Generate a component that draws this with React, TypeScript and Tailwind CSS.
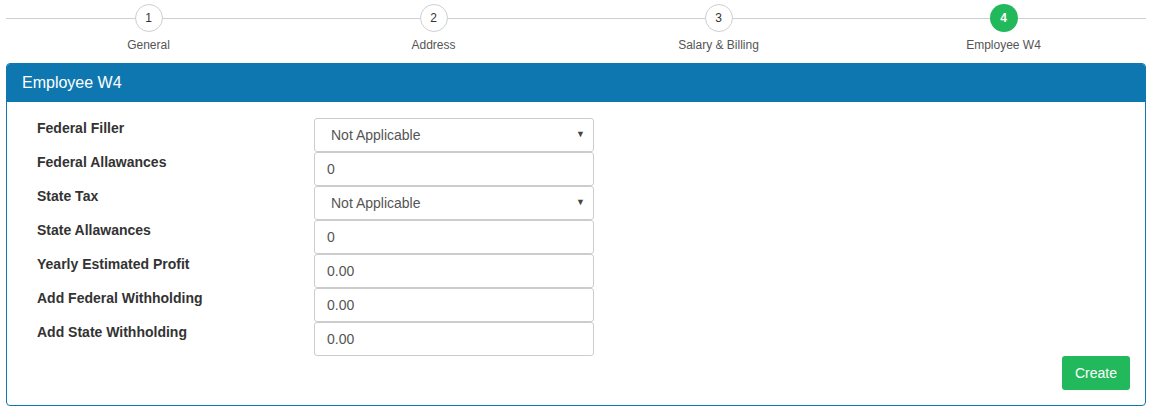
import React from "react";

const steps = [
	{ n: 1, label: "General" },
	{ n: 2, label: "Address" },
	{ n: 3, label: "Salary & Billing" },
	{ n: 4, label: "Employee W4", active: true },
];

const fields = [
	{ label: "Federal Filler", value: "Not Applicable", select: true },
	{ label: "Federal Allawances", value: "0" },
	{ label: "State Tax", value: "Not Applicable", select: true },
	{ label: "State Allawances", value: "0" },
	{ label: "Yearly Estimated Profit", value: "0.00" },
	{ label: "Add Federal Withholding", value: "0.00" },
	{ label: "Add State Withholding", value: "0.00" },
];

function Stepper() {
	return (
		<div className="relative mx-[6px] grid grid-cols-4 pt-[4px]">
			<div className="absolute left-0 right-0 top-[18px] h-px bg-[#cfcfcf]" />
			{steps.map((s) => (
				<div key={s.n} className="relative flex flex-col items-center">
					<div
						className={
							s.active
								? "flex h-[28px] w-[28px] items-center justify-center rounded-full bg-[#22b95c] text-[12px] font-bold text-white"
								: "flex h-[28px] w-[28px] items-center justify-center rounded-full border border-[#cfcfcf] bg-white text-[12px] text-[#333]"
						}>
						{s.n}
					</div>
					<div className="mt-[6px] text-[12px] leading-[14px] text-[#555]">{s.label}</div>
				</div>
			))}
		</div>
	);
}

export default function App() {
	return (
		<div className="h-[412px] w-[1152px] bg-white font-['Liberation_Sans',Arial,sans-serif] text-[#333]">
			<Stepper />
			<div className="mx-[6px] mt-[11px] overflow-hidden rounded-[4px] border border-[#0f77b0]">
				<div className="flex h-[38px] items-center bg-[#0f77b0] px-[15px] text-[16px] text-white">
					Employee W4
				</div>
				<div className="pb-[15px] pl-[30px] pr-[15px] pt-[16px]">
					{fields.map((f) => (
						<div key={f.label} className="flex">
							<div className="w-[277px] text-[14px] font-bold leading-[20px] text-[#333]">
								{f.label}
							</div>
							<div className="flex h-[34px] w-[280px] items-center justify-between rounded-[3px] border border-[#cccccc] bg-white text-[14px] text-[#555]">
								<span className={f.select ? "pl-[16px]" : "pl-[12px]"}>{f.value}</span>
								{f.select && <span className="pr-[8px] text-[9px] text-[#444]">▼</span>}
							</div>
						</div>
					))}
					<div className="flex justify-end">
						<button className="h-[34px] rounded-[3px] bg-[#22b95c] px-[13px] text-[14px] text-white">
							Create
						</button>
					</div>
				</div>
			</div>
		</div>
	);
}
